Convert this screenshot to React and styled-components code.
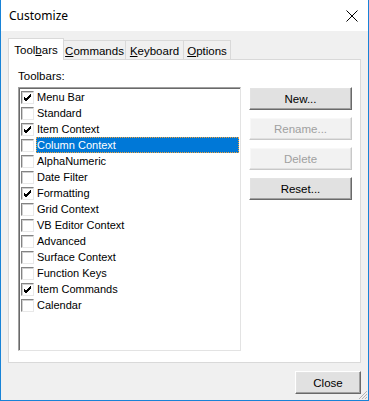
import React from 'react'
import styled, { createGlobalStyle } from 'styled-components'

const GlobalStyle = createGlobalStyle`
  html, body {
    margin: 0;
    padding: 0;
    background: #ffffff;
  }
`

const Window = styled.div`
  position: relative;
  box-sizing: border-box;
  width: 369px;
  height: 401px;
  display: flex;
  flex-direction: column;
  border: 1px solid #1883d7;
  border-top: none;
  background: #f0f0f0;
  font-family: 'Liberation Sans', Arial, sans-serif;
  font-size: 11px;
  color: #000;
`

const TitleBar = styled.div`
  height: 31px;
  flex: none;
  display: flex;
  align-items: center;
  justify-content: space-between;
  background: #fff;
  padding: 0 10px 0 8px;
`

const Title = styled.span`
  font-family: 'Noto Sans', 'Open Sans', sans-serif;
  font-size: 12px;
  color: #000;
`

const CloseIcon = styled.svg`
  width: 12px;
  height: 12px;
  display: block;
`

const Body = styled.div`
  flex: 1;
  display: flex;
  flex-direction: column;
  padding: 7px 7px 0 7px;
`

const TabRow = styled.div`
  display: flex;
  align-items: flex-end;
  height: 22px;
  position: relative;
  z-index: 1;
  margin-bottom: -1px;
`

const Tab = styled.div`
  box-sizing: border-box;
  width: ${p => p.$w}px;
  height: ${p => (p.$active ? 22 : 20)}px;
  display: flex;
  align-items: center;
  justify-content: center;
  border: 1px solid #d9d9d9;
  border-bottom: ${p => (p.$active ? 'none' : '1px solid #d9d9d9')};
  margin-left: ${p => (p.$first ? 0 : -1)}px;
  background: ${p => (p.$active ? '#fff' : '#f0f0f0')};
  padding-top: ${p => (p.$active ? 0 : 1)}px;
  font-size: 11.5px;
`

const Panel = styled.div`
  box-sizing: border-box;
  height: 304px;
  background: #fff;
  border: 1px solid #d9d9d9;
  padding: 10px 8px 0 9px;
`

const Label = styled.div`
  height: 17px;
  font-size: 11.5px;
`

const Content = styled.div`
  display: flex;
  gap: 8px;
`

const ListBox = styled.div`
  box-sizing: border-box;
  width: 224px;
  height: 264px;
  border-top: 1px solid #a0a0a0;
  border-left: 1px solid #a0a0a0;
  border-right: 1px solid #e3e3e3;
  border-bottom: 1px solid #e3e3e3;
  box-shadow: inset 1px 1px 0 #696969;
  padding: 1px 0 0 1px;
  background: #fff;
`

const Row = styled.div`
  height: 16px;
  display: flex;
  align-items: center;
`

const Check = styled.div`
  box-sizing: border-box;
  width: 13px;
  height: 13px;
  margin: 0 2px 0 1px;
  flex: none;
  border-top: 1px solid #838383;
  border-left: 1px solid #838383;
  border-right: 1px solid #e8e8e8;
  border-bottom: 1px solid #e8e8e8;
  box-shadow: inset 1px 1px 0 #d0d0d0;
  background: #fff;
  display: flex;
  align-items: center;
  justify-content: center;
`

const ItemText = styled.div`
  flex: 1;
  height: 16px;
  box-sizing: border-box;
  display: flex;
  align-items: center;
  padding-left: 1px;
  margin-right: 1px;
  background: ${p => (p.$selected ? '#0078d7' : 'transparent')};
  color: ${p => (p.$selected ? '#fff' : '#000')};
  outline: ${p => (p.$selected ? '1px dotted #f2a33a' : 'none')};
  outline-offset: -1px;
`

const ButtonColumn = styled.div`
  display: flex;
  flex-direction: column;
  gap: 7px;
`

const Button = styled.div`
  box-sizing: border-box;
  width: ${p => p.$w || 103}px;
  height: 23px;
  display: flex;
  align-items: center;
  justify-content: center;
  font-size: 11.5px;
  background: ${p => (p.$disabled ? '#f2f2f2' : '#e1e1e1')};
  color: ${p => (p.$disabled ? '#a0a0a0' : '#000')};
  border-top: 1px solid #fff;
  border-left: 1px solid #fff;
  border-right: 1px solid ${p => (p.$disabled ? '#c8c8c8' : '#696969')};
  border-bottom: 1px solid ${p => (p.$disabled ? '#c8c8c8' : '#696969')};
  box-shadow: inset -1px -1px 0 ${p => (p.$disabled ? '#e0e0e0' : '#a0a0a0')},
    inset 1px 1px 0 ${p => (p.$disabled ? '#f8f8f8' : '#e3e3e3')};
`

const Footer = styled.div`
  display: flex;
  justify-content: flex-end;
  padding-top: 8px;
`

const Grip = styled.svg`
  position: absolute;
  right: 0;
  bottom: 0;
  width: 12px;
  height: 12px;
`

const items = [
  ['Menu Bar', true],
  ['Standard', false],
  ['Item Context', true],
  ['Column Context', false, true],
  ['AlphaNumeric', false],
  ['Date Filter', false],
  ['Formatting', true],
  ['Grid Context', false],
  ['VB Editor Context', false],
  ['Advanced', false],
  ['Surface Context', false],
  ['Function Keys', false],
  ['Item Commands', true],
  ['Calendar', false],
]

const CheckMark = () => (
  <svg width="9" height="9" viewBox="0 0 9 9">
    <path d="M1 4 L3 6 L8 1 M1 5 L3 7 L8 2 M1 6 L3 8 L8 3" stroke="#000" strokeWidth="1" fill="none" shapeRendering="crispEdges" />
  </svg>
)

const App = () => (
  <>
    <GlobalStyle />
    <Window>
      <TitleBar>
        <Title>Customize</Title>
        <CloseIcon viewBox="0 0 12 12">
          <path d="M0.5 0.5 L11.5 11.5 M11.5 0.5 L0.5 11.5" stroke="#000" strokeWidth="1" />
        </CloseIcon>
      </TitleBar>
      <Body>
        <TabRow>
          <Tab $active $first $w={56}>
            Tool<u>b</u>ars
          </Tab>
          <Tab $w={63}>
            <u>C</u>ommands
          </Tab>
          <Tab $w={59}>
            <u>K</u>eyboard
          </Tab>
          <Tab $w={48}>
            <u>O</u>ptions
          </Tab>
        </TabRow>
        <Panel>
          <Label>Toolbars:</Label>
          <Content>
            <ListBox>
              {items.map(([name, checked, selected]) => (
                <Row key={name}>
                  <Check>{checked && <CheckMark />}</Check>
                  <ItemText $selected={selected}>{name}</ItemText>
                </Row>
              ))}
            </ListBox>
            <ButtonColumn>
              <Button>New...</Button>
              <Button $disabled>Rename...</Button>
              <Button $disabled>Delete</Button>
              <Button>Reset...</Button>
            </ButtonColumn>
          </Content>
        </Panel>
        <Footer>
          <Button $w={66}>Close</Button>
        </Footer>
      </Body>
      <Grip viewBox="0 0 12 12">
        <path d="M11 3 L3 11 M11 6 L6 11 M11 9 L9 11" stroke="#b4b4b4" strokeWidth="1" />
      </Grip>
    </Window>
  </>
)

export default App
